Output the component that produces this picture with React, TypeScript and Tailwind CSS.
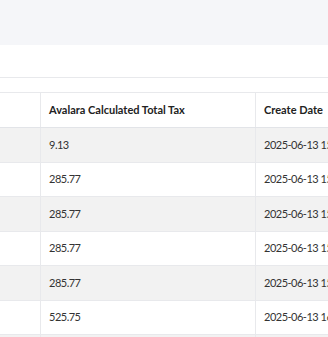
const rows = [
  { tax: "9.13", date: "2025-06-13 15:02:11" },
  { tax: "285.77", date: "2025-06-13 15:10:45" },
  { tax: "285.77", date: "2025-06-13 15:18:02" },
  { tax: "285.77", date: "2025-06-13 15:26:37" },
  { tax: "285.77", date: "2025-06-13 15:41:09" },
  { tax: "525.75", date: "2025-06-13 16:05:22" },
  { tax: "12.40", date: "2025-06-13 16:12:50" },
];

const App = () => {
  return (
    <div className="w-[328px] h-[337px] overflow-hidden bg-white text-[11px] text-[#333] font-['Lato','Noto_Sans',sans-serif]">
      {/* page header band */}
      <div className="h-[45px] bg-[#f5f6f9]" />

      {/* toolbar */}
      <div className="h-[33px] border-b border-[#e8e9ec]" />

      <div className="h-[14px]" />

      {/* table */}
      <div className="border-t border-[#e8e9ec] w-[520px]">
        <div className="grid grid-cols-[40px_215px_265px] h-[35px] border-b border-[#e2e4e8] font-bold text-[#222]">
          <div />
          <div className="flex items-center px-2 border-l border-[#e8e9ec]">
            Avalara Calculated Total Tax
          </div>
          <div className="flex items-center px-2 border-l border-[#e8e9ec]">
            Create Date
          </div>
        </div>

        {rows.map((r, i) => (
          <div
            key={i}
            className={`grid grid-cols-[40px_215px_265px] h-[34.5px] border-b border-[#e8e9ec] tracking-[-0.5px] ${
              i % 2 === 0 ? "bg-[#f2f2f2]" : "bg-white"
            }`}
          >
            <div />
            <div className="flex items-center px-2 border-l border-[#e8e9ec]">{r.tax}</div>
            <div className="flex items-center px-2 border-l border-[#e8e9ec] whitespace-nowrap">
              {r.date}
            </div>
          </div>
        ))}
      </div>
    </div>
  );
};

export default App;
